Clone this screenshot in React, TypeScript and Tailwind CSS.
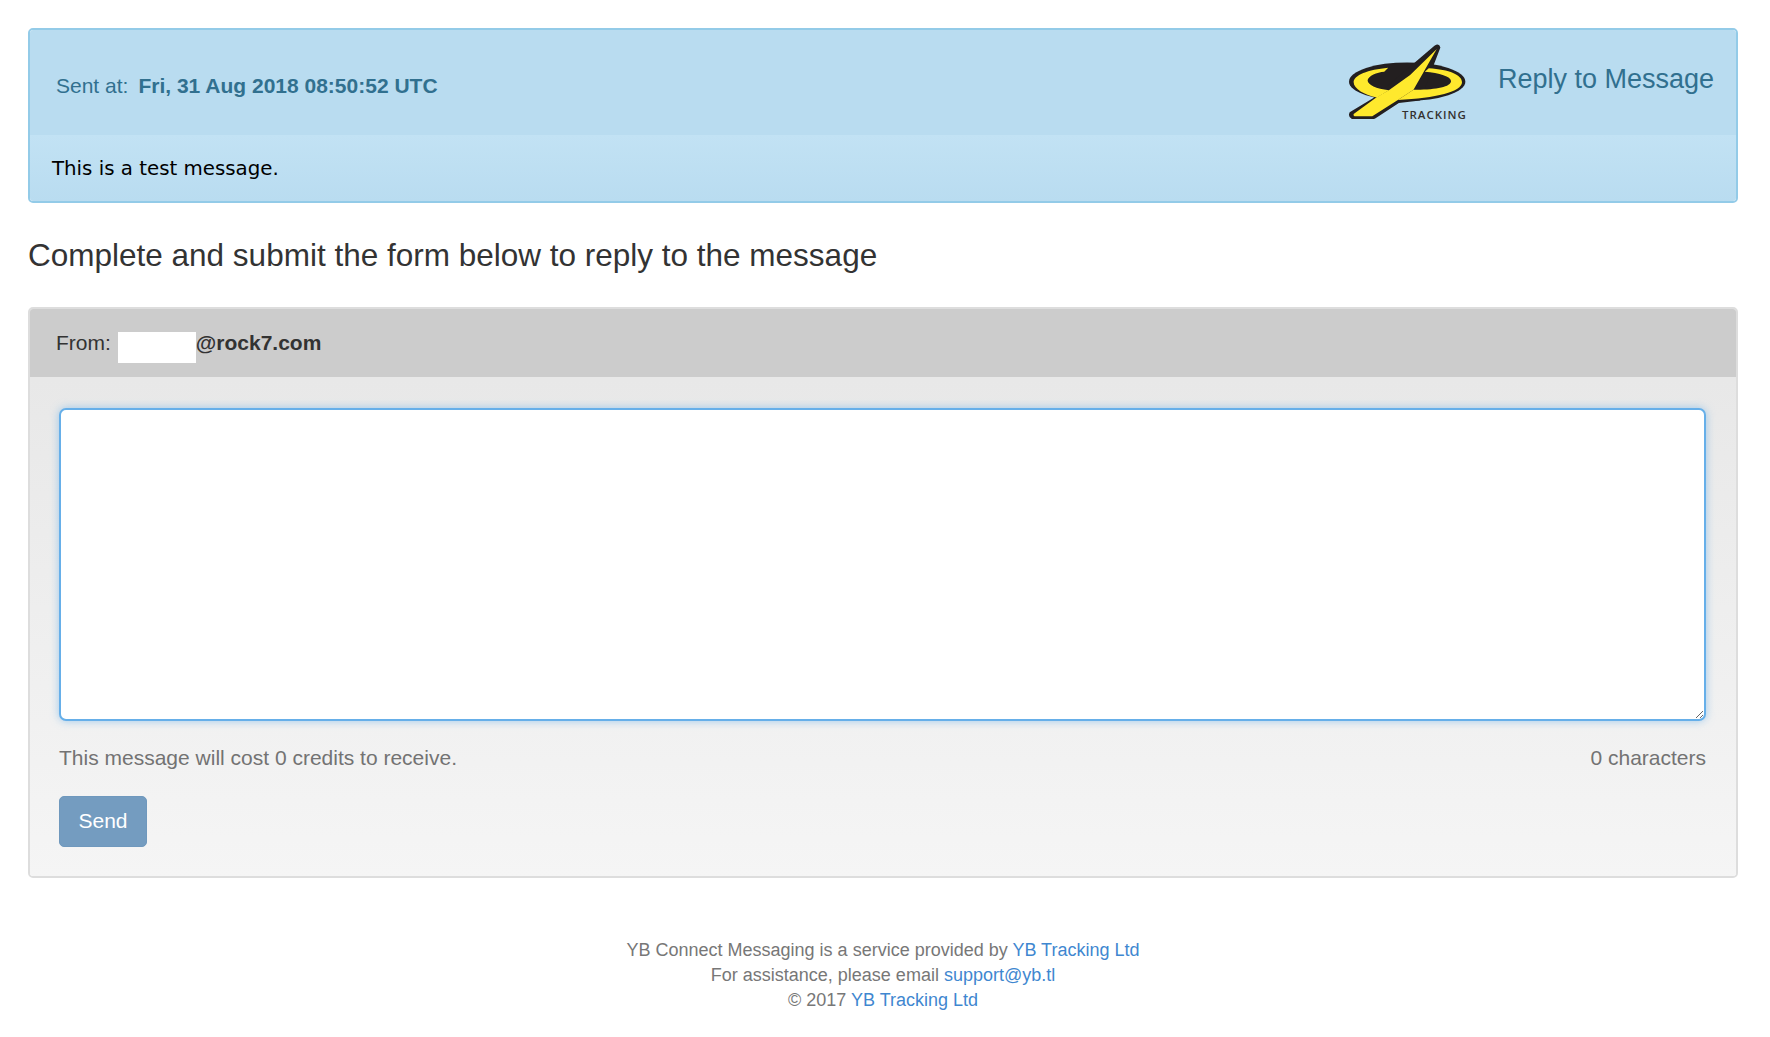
import React from "react";

const sans = "font-['Liberation_Sans',Arial,sans-serif]";

const YbLogo = () => (
  <div className="relative h-[78px] w-[119px] shrink-0">
    <svg viewBox="25 15 355 225" className="h-[75px] w-[118px]">
      {/* black outline */}
      <ellipse cx="203" cy="128" rx="175" ry="58" fill="#231f20" />
      <path
        d="M285 20 Q299 10 303 25 L242 185 L178 192 L108 238 Q98 244 45 243 Q22 238 30 220 L100 178 Z"
        fill="#231f20"
      />
      {/* yellow ring, left side */}
      <path
        d="M146 86 C85 92 42 108 42 130 C42 150 75 168 112 176 L148 154 C110 150 84 138 84 124 C86 110 112 100 134 98 Z"
        fill="#ffe92d"
      />
      {/* yellow blade */}
      <path
        d="M292 30 L222 152 L175 183 L98 232 L48 232 Q40 232 42 225 L110 176 L150 152 L212 108 Z"
        fill="#ffe92d"
      />
      {/* yellow ring, right side */}
      <path
        d="M268 88 C330 92 368 108 368 130 C368 158 290 178 175 183 L222 152 C285 153 335 145 335 126 C335 112 300 102 256 98 Z"
        fill="#ffe92d"
      />
    </svg>
    <span className="absolute right-0 bottom-[1px] font-['Open_Sans',sans-serif] text-[11.5px] leading-none font-semibold tracking-[1px] text-[#33302f]">
      TRACKING
    </span>
  </div>
);

const App = () => {
  return (
    <div className={`${sans} min-h-[1037px] bg-white pt-[28px] pr-[32px] pl-[28px] text-[21px] text-[#333]`}>
      {/* message panel */}
      <div className="overflow-hidden rounded-[5px] border-2 border-[#93cbe8]">
        <div className="flex h-[105px] items-center justify-between bg-[#b9dcf0] pr-[22px] pl-[26px] text-[#31708f]">
          <div className="flex items-center gap-[10px] pt-[6px]">
            <span>Sent at:</span>
            <b>Fri, 31 Aug 2018 08:50:52 UTC</b>
          </div>
          <div className="flex items-center gap-[31px]">
            <YbLogo />
            <span className="pb-[6px] text-[27px]">Reply to Message</span>
          </div>
        </div>
        <div className="h-[66px] bg-gradient-to-b from-[#c2e2f4] to-[#b9dcf0] pt-[19px] pl-[22px] font-['DejaVu_Sans',sans-serif] text-[19.8px] leading-[30px] text-black">
          This is a test message.
        </div>
      </div>

      <h4 className="mt-[32px] mb-[32px] text-[31.5px] leading-[40px] font-normal">
        Complete and submit the form below to reply to the message
      </h4>

      {/* reply panel */}
      <div className="overflow-hidden rounded-[5px] border-2 border-[#ddd]">
        <div className="flex h-[68px] items-center bg-[#ccc] pl-[26px]">
          <span className="pb-[1px]">From:</span>
          <span className="ml-[7px] h-[31px] w-[78px] translate-y-[4px] bg-white" />
          <b className="pb-[1px]">@rock7.com</b>
        </div>
        <div className="bg-gradient-to-b from-[#e8e8e8] to-[#f5f5f5] pt-[31px] pr-[30px] pb-[29px] pl-[29px]">
          <textarea className="block h-[313px] w-full resize-y rounded-[7px] border-2 border-[#66afe9] bg-white shadow-[0_0_8px_rgba(102,175,233,0.6)] outline-none" />
          <div className="mt-[24px] flex justify-between leading-[26px] text-[#737373]">
            <span>This message will cost 0 credits to receive.</span>
            <span>0 characters</span>
          </div>
          <button className="mt-[25px] block h-[51px] w-[88px] rounded-[5px] border border-[#6f98bd] bg-[#749cc0] pb-[2px] text-white">
            Send
          </button>
        </div>
      </div>

      <footer className="mt-[60px] text-center text-[18px] leading-[25px] text-[#777]">
        <div>
          YB Connect Messaging is a service provided by <a className="text-[#3f87d0]">YB Tracking Ltd</a>
        </div>
        <div>
          For assistance, please email <a className="text-[#3f87d0]">support@yb.tl</a>
        </div>
        <div>
          © 2017 <a className="text-[#3f87d0]">YB Tracking Ltd</a>
        </div>
      </footer>
    </div>
  );
};

export default App;
